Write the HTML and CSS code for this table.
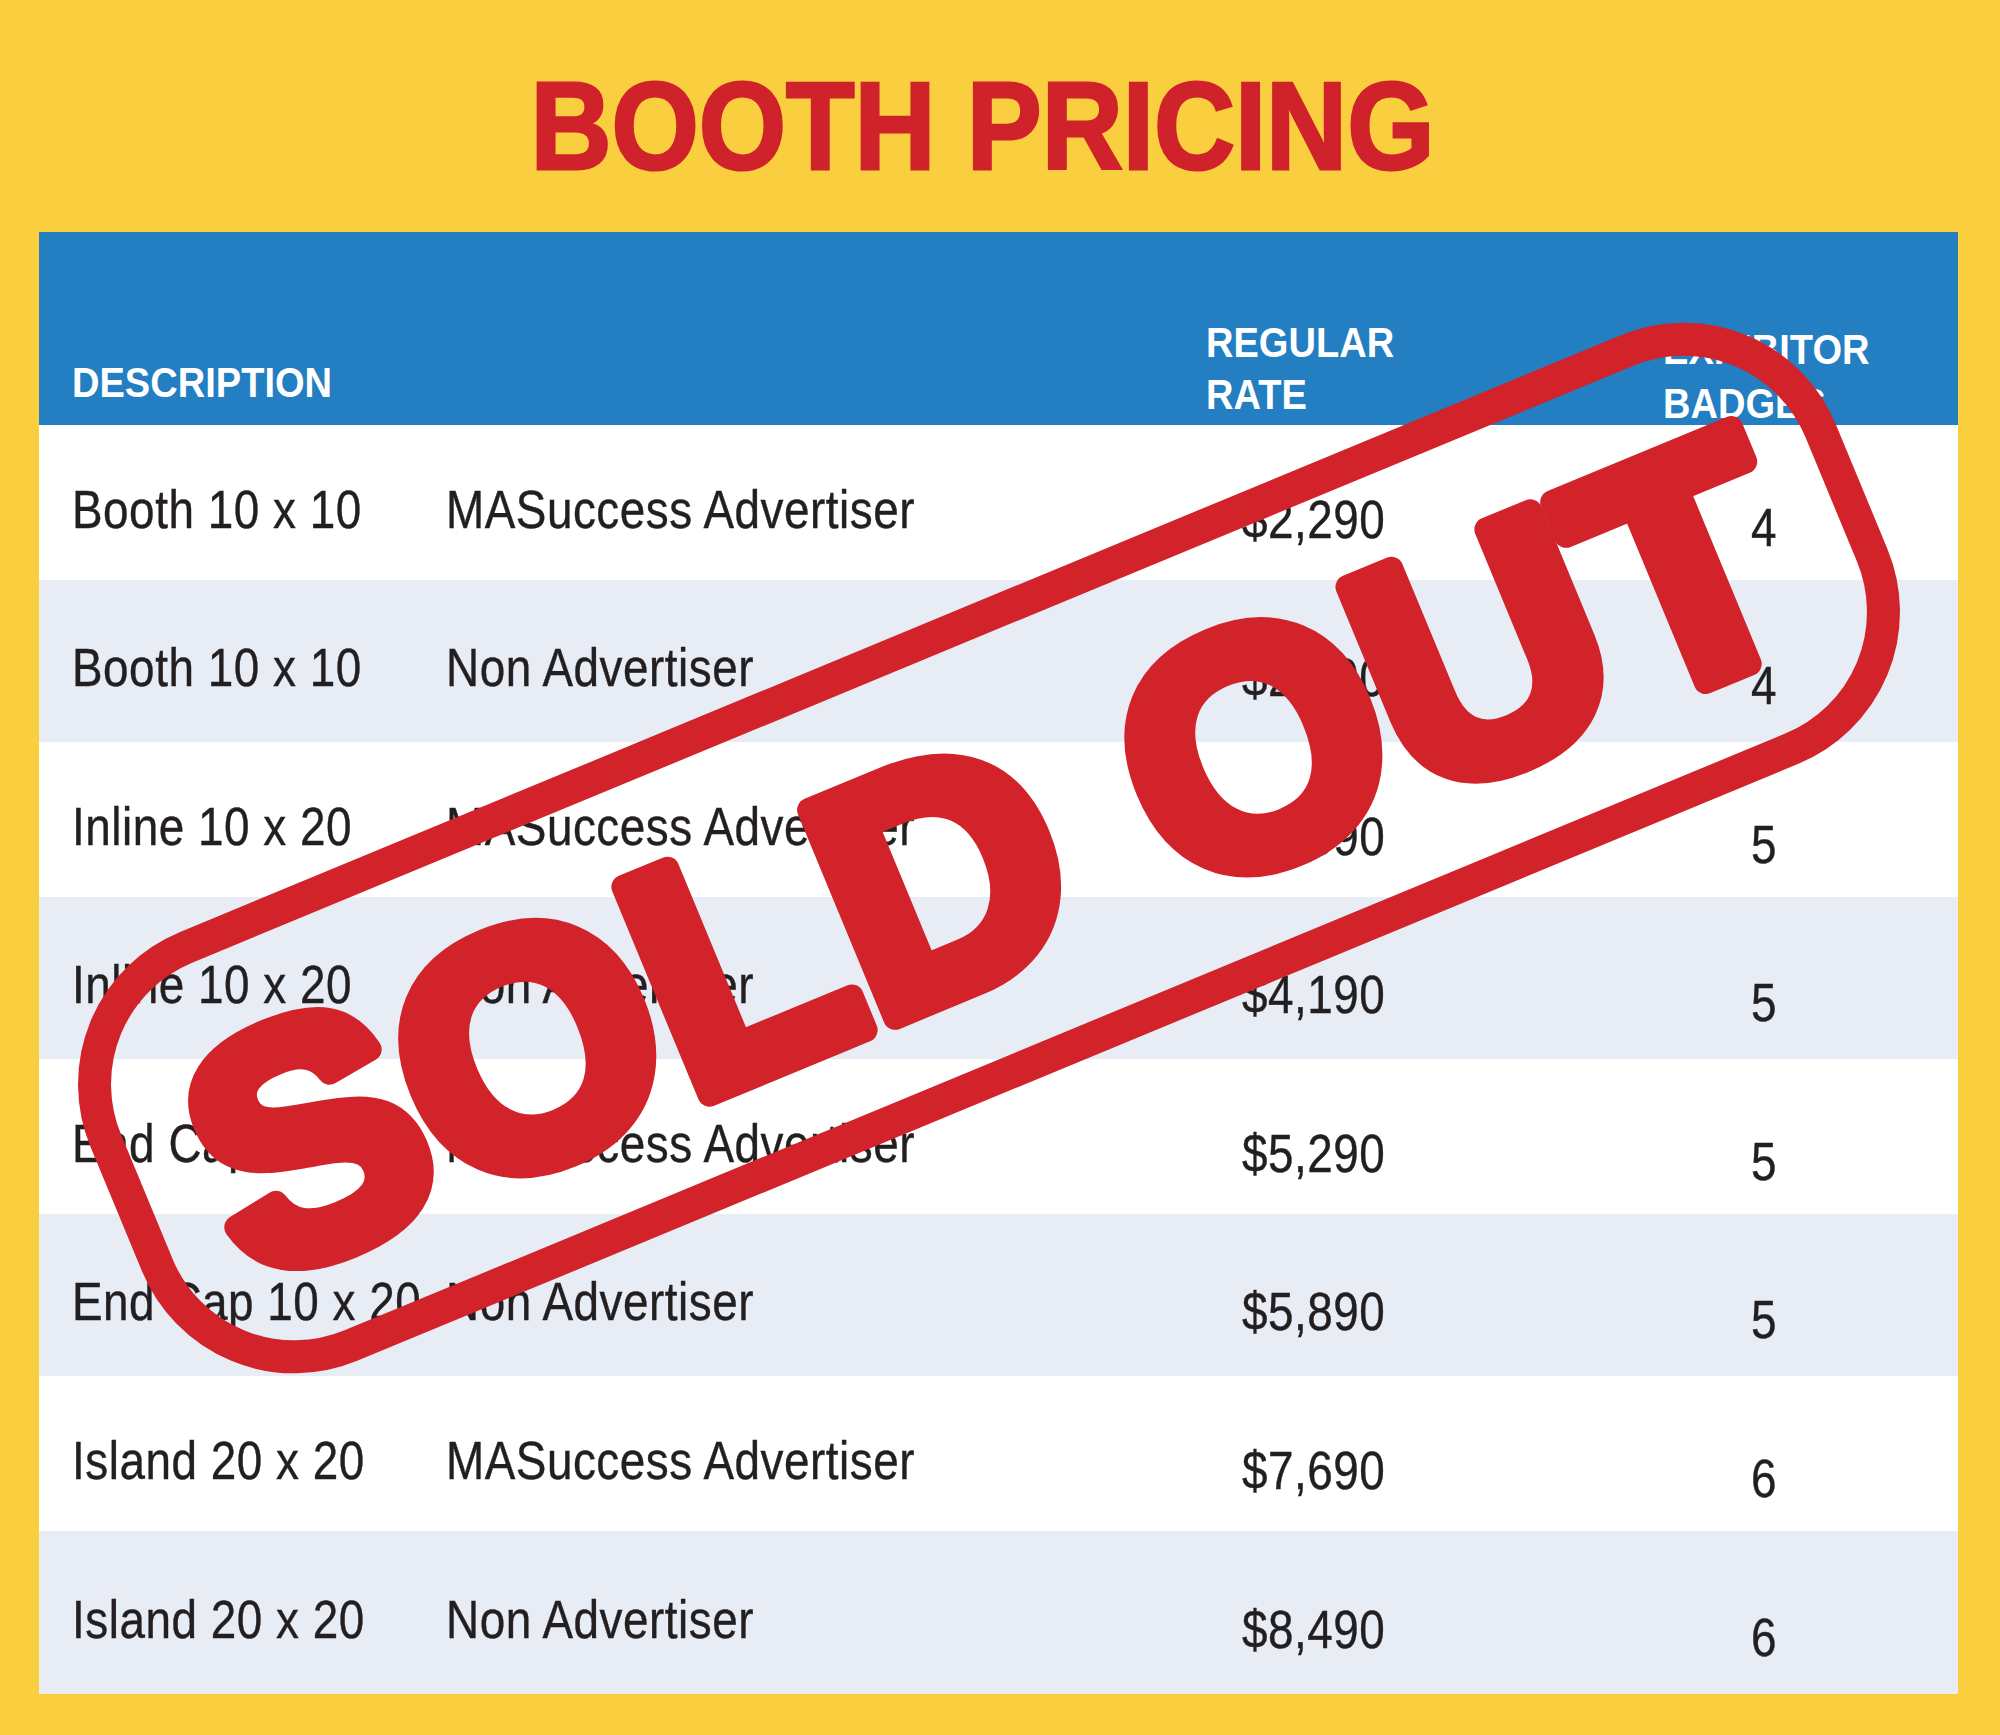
FILE: index.html
```html
<!DOCTYPE html>
<html lang="en">
<head>
<meta charset="utf-8">
<title>Booth Pricing</title>
<link rel="stylesheet" href="styles.css">
</head>
<body>
<main class="page">
  <h1 class="title"><span>BOOTH PRICING</span></h1>
  <section class="table">
    <div class="thead">
      <div class="th th-desc"><span>DESCRIPTION</span></div>
      <div class="th th-rate"><span>REGULAR<br>RATE</span></div>
      <div class="th th-badges"><span>EXHIBITOR<br>BADGES</span></div>
    </div>
    <div class="row">
      <div class="cell c-type"><span>Booth 10 x 10</span></div>
      <div class="cell c-adv"><span>MASuccess Advertiser</span></div>
      <div class="cell c-price"><span>$2,290</span></div>
      <div class="cell c-badge"><span>4</span></div>
    </div>
    <div class="row shade">
      <div class="cell c-type"><span>Booth 10 x 10</span></div>
      <div class="cell c-adv"><span>Non Advertiser</span></div>
      <div class="cell c-price"><span>$2,890</span></div>
      <div class="cell c-badge"><span>4</span></div>
    </div>
    <div class="row">
      <div class="cell c-type"><span>Inline 10 x 20</span></div>
      <div class="cell c-adv"><span>MASuccess Advertiser</span></div>
      <div class="cell c-price"><span>$3,590</span></div>
      <div class="cell c-badge"><span>5</span></div>
    </div>
    <div class="row shade">
      <div class="cell c-type"><span>Inline 10 x 20</span></div>
      <div class="cell c-adv"><span>Non Advertiser</span></div>
      <div class="cell c-price"><span>$4,190</span></div>
      <div class="cell c-badge"><span>5</span></div>
    </div>
    <div class="row">
      <div class="cell c-type"><span>End Cap 10 x 20</span></div>
      <div class="cell c-adv"><span>MASuccess Advertiser</span></div>
      <div class="cell c-price"><span>$5,290</span></div>
      <div class="cell c-badge"><span>5</span></div>
    </div>
    <div class="row shade">
      <div class="cell c-type"><span>End Cap 10 x 20</span></div>
      <div class="cell c-adv"><span>Non Advertiser</span></div>
      <div class="cell c-price"><span>$5,890</span></div>
      <div class="cell c-badge"><span>5</span></div>
    </div>
    <div class="row">
      <div class="cell c-type"><span>Island 20 x 20</span></div>
      <div class="cell c-adv"><span>MASuccess Advertiser</span></div>
      <div class="cell c-price"><span>$7,690</span></div>
      <div class="cell c-badge"><span>6</span></div>
    </div>
    <div class="row shade last">
      <div class="cell c-type"><span>Island 20 x 20</span></div>
      <div class="cell c-adv"><span>Non Advertiser</span></div>
      <div class="cell c-price"><span>$8,490</span></div>
      <div class="cell c-badge"><span>6</span></div>
    </div>
  </section>
  <svg class="stamp" viewBox="0 0 2000 1735" width="2000" height="1735" aria-hidden="true">
    <g transform="rotate(-22.5 989 848)">
      <rect class="stamp-frame" x="61" y="632.5" width="1856" height="431" rx="148" ry="148"/>
      <text class="stamp-text" x="989" y="969" text-anchor="middle" textLength="1700" lengthAdjust="spacingAndGlyphs">SOLD OUT</text>
    </g>
  </svg>
</main>
</body>
</html>
```
FILE: styles.css
```css
html, body {
  margin: 0;
  padding: 0;
}
body {
  background: #F9CE3F;
  width: 2000px;
  height: 1735px;
  overflow: hidden;
}
.page {
  position: relative;
  width: 2000px;
  height: 1735px;
  font-family: "Liberation Sans", Arial, sans-serif;
}
.title {
  margin: 0;
  box-sizing: border-box;
  height: 232px;
  padding: 64px 36px 0 0;
  text-align: center;
  font-size: 124px;
  line-height: 124px;
  font-weight: 700;
  color: #D0222A;
  -webkit-text-stroke: 3px #D0222A;
}
.title span {
  display: inline-block;
  white-space: nowrap;
  transform: scaleX(0.905);
  transform-origin: 50% 50%;
}
.table {
  margin-left: 39px;
  width: 1919px;
  background: #fff;
}
.thead,
.row {
  display: grid;
  grid-template-columns: 374px 760px 457px 1fr;
  padding-left: 33px;
}
.thead {
  height: 193px;
  background: #237EC2;
  color: #fff;
  align-items: start;
}
.th {
  font-size: 43px;
  font-weight: 700;
  line-height: 52px;
}
.th span,
.cell span {
  display: inline-block;
  white-space: nowrap;
  transform-origin: 0 50%;
}
.th span {
  transform: scaleX(0.885);
}
.th-desc {
  grid-column: 1 / 3;
  padding-top: 124px;
}
.th-rate {
  padding-top: 84px;
}
.th-badges {
  padding-top: 90px;
  line-height: 54px;
}
.row {
  height: 155px;
  align-items: center;
  color: #231F20;
  font-size: 53px;
  line-height: 53px;
}
.cell span {
  transform: scaleX(0.865);
  letter-spacing: 0.6px;
  -webkit-text-stroke: 0.4px #231F20;
}
.row.shade {
  height: 162px;
  background: #E7ECF5;
}
.row.last {
  height: 163px;
}
.c-type,
.c-adv {
  padding-top: 13px;
}
.c-price {
  padding-top: 33px;
  padding-left: 36px;
}
.c-badge {
  padding-top: 49px;
  padding-left: 88px;
}
.stamp {
  position: absolute;
  left: 0;
  top: 0;
  pointer-events: none;
}
.stamp-frame {
  fill: none;
  stroke: #D2232A;
  stroke-width: 33;
}
.stamp-text {
  font-family: "Liberation Sans", Arial, sans-serif;
  font-weight: 700;
  font-size: 327px;
  fill: #D2232A;
  stroke: #D2232A;
  stroke-width: 24;
  stroke-linejoin: round;
}
```
